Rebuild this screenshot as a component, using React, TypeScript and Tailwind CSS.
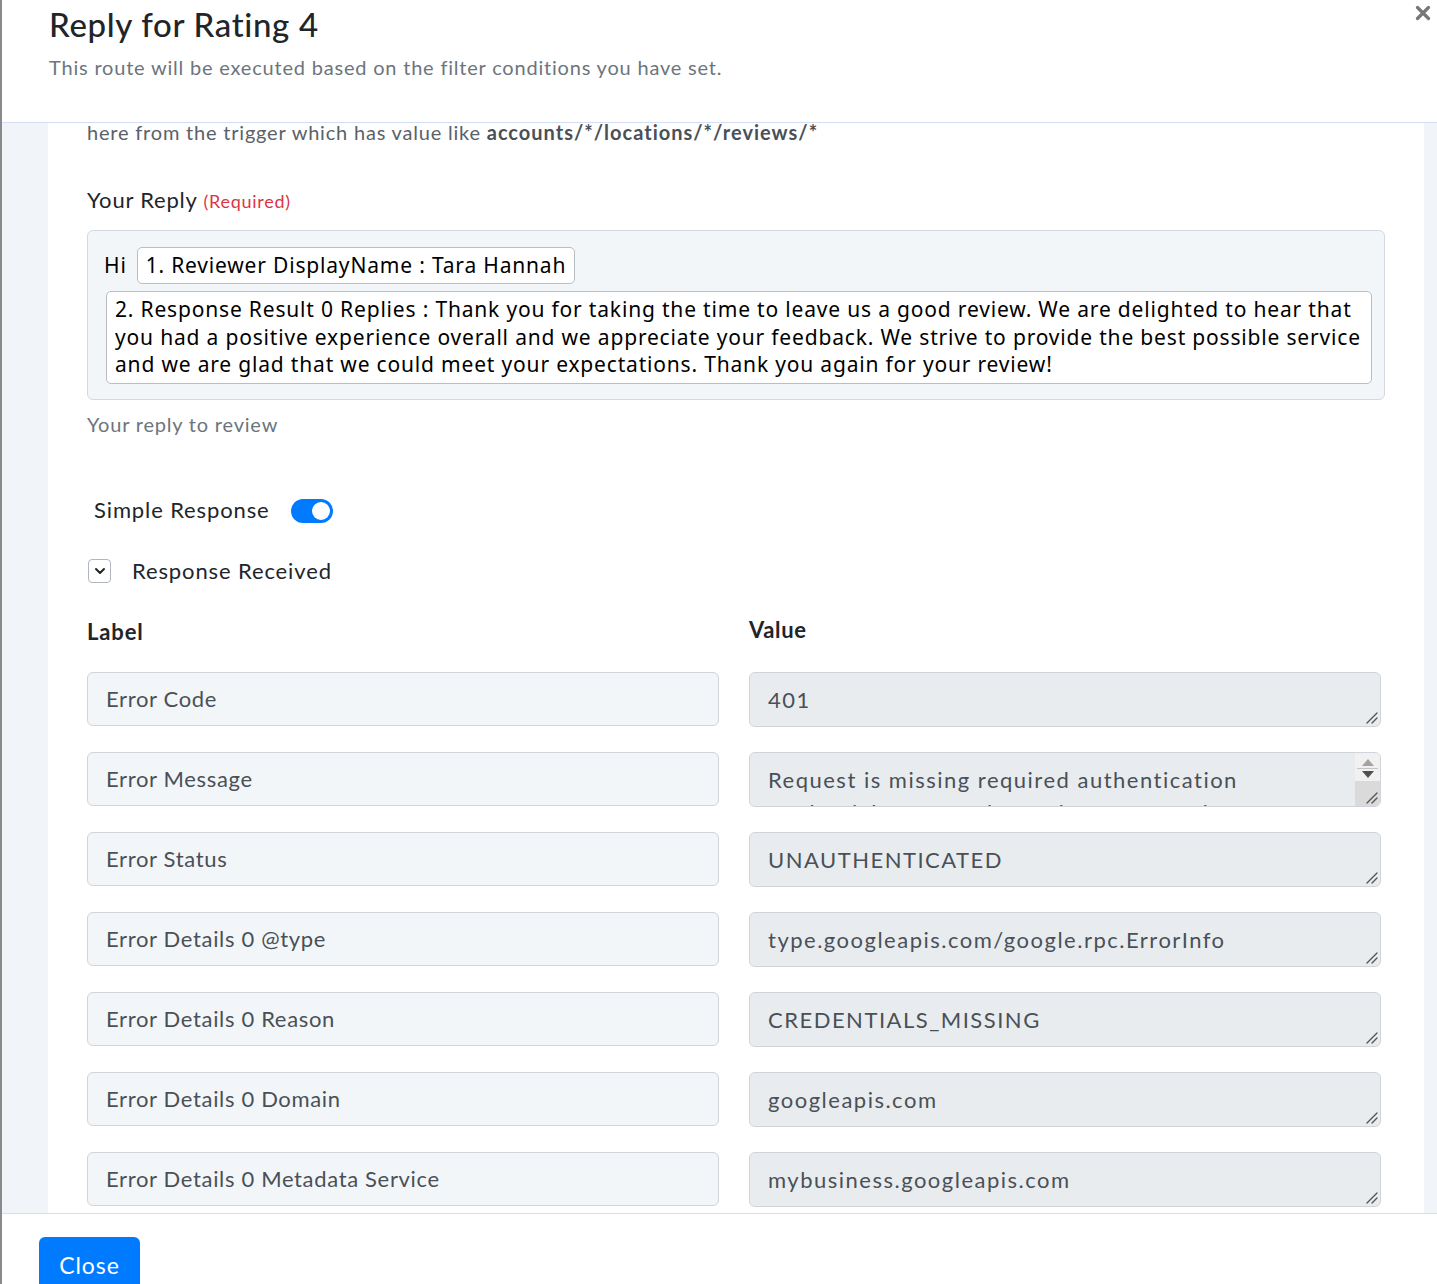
import { X, ChevronDown } from "lucide-react"

const rows = [
  { label: "Error Code", value: "401" },
  {
    label: "Error Message",
    value: "Request is missing required authentication credential. Expected OAuth 2 access token,",
    scroll: true,
  },
  { label: "Error Status", value: "UNAUTHENTICATED" },
  { label: "Error Details 0 @type", value: "type.googleapis.com/google.rpc.ErrorInfo" },
  { label: "Error Details 0 Reason", value: "CREDENTIALS_MISSING" },
  { label: "Error Details 0 Domain", value: "googleapis.com" },
  { label: "Error Details 0 Metadata Service", value: "mybusiness.googleapis.com" },
]

export default function App() {
  return (
    <div className="flex h-[1284px] w-full flex-col overflow-hidden border-l-2 border-[#8a8a8a] bg-white font-['Lato',sans-serif]">
      {/* header */}
      <div className="relative h-[123px] shrink-0 border-b border-[#d3def5] bg-white pl-[47px]">
        <h1 className="pt-[2px] text-[33px] leading-[44px] font-medium tracking-[0.02em] text-[#212529]">Reply for Rating 4</h1>
        <p className="mt-[7px] text-[20px] leading-[28px] tracking-[0.04em] text-[#6c757d]">
          This route will be executed based on the filter conditions you have set.
        </p>
        <button className="absolute top-[2px] right-[3px] text-[#777]">
          <X size={22} strokeWidth={3.5} />
        </button>
      </div>

      {/* body */}
      <div className="flex min-h-0 flex-1 overflow-hidden bg-[#f1f4f8] pl-[46px] pr-[13px]">
        <div className="min-w-0 flex-1 bg-white px-[39px]">
          <p className="text-[20px] leading-[18px] tracking-[0.04em] text-[#5a6169]">
            here from the trigger which has value like{" "}
            <span className="font-bold tracking-[0.05em] text-[#495057]">accounts/*/locations/*/reviews/*</span>
          </p>

          <div className="mt-[44px] text-[22px] leading-[30px] tracking-[0.036em] text-[#212529]">
            Your Reply <span className="text-[18px] tracking-[0.04em] text-[#dc3545]">(Required)</span>
          </div>

          <div className="mt-[14px] rounded-[6px] border border-[#d4d9df] bg-[#f3f6f9] pt-[16px] pr-[12px] pb-[15px] pl-[15px] font-['Noto_Sans',sans-serif] text-[21px] tracking-[0.039em] text-black">
            <div className="flex items-center gap-[10px]">
              <span className="ml-[1px]">Hi</span>
              <span className="rounded-[5px] border border-[#b9bec4] bg-white px-[8px] leading-[35px] whitespace-nowrap">
                1. Reviewer DisplayName : Tara Hannah
              </span>
            </div>
            <div className="mt-[7px] ml-[3px] overflow-hidden rounded-[5px] border border-[#b9bec4] bg-white px-[8px] py-[4px] leading-[27.5px] whitespace-nowrap">
              2. Response Result 0 Replies : Thank you for taking the time to leave us a good review. We are delighted to hear that
              <br />
              you had a positive experience overall and we appreciate your feedback. We strive to provide the best possible service
              <br />
              and we are glad that we could meet your expectations. Thank you again for your review!
            </div>
          </div>

          <div className="mt-[9px] text-[20px] leading-[30px] tracking-[0.04em] text-[#6c757d]">Your reply to review</div>

          <div className="mt-[56px] flex items-center pl-[7px]">
            <span className="text-[22px] leading-[30px] tracking-[0.04em] text-[#212529]">Simple Response</span>
            <span className="ml-[21px] mt-[2px] flex h-[24px] w-[42px] items-center justify-end rounded-full bg-[#007bff] pr-[3px]">
              <span className="h-[18px] w-[18px] rounded-full bg-white" />
            </span>
          </div>

          <div className="mt-[31px] flex items-center pl-[1px]">
            <span className="flex h-[24px] w-[23px] items-center justify-center rounded-[4px] border border-[#b0b6bd] text-[#212529]">
              <ChevronDown size={16} strokeWidth={3} />
            </span>
            <span className="ml-[21px] text-[22px] leading-[30px] tracking-[0.04em] text-[#212529]">Response Received</span>
          </div>

          <div className="mt-[31px] grid grid-cols-2 gap-x-[30px] pr-[4px]">
            <div className="text-[22px] leading-[30px] font-bold tracking-[0.04em] text-[#212529]">Label</div>
            <div className="-mt-[2px] text-[22px] leading-[30px] font-bold tracking-[0.03em] text-[#212529]">Value</div>
          </div>

          <div className="mt-[25px] grid grid-cols-2 gap-x-[30px] gap-y-[25px] pr-[4px]">
            {rows.map((r) => (
              <Row key={r.label} label={r.label} value={r.value} scroll={!!r.scroll} />
            ))}
          </div>
        </div>
      </div>

      {/* footer */}
      <div className="h-[71px] shrink-0 border-t border-[#d3def5] bg-white pt-[23px] pl-[37px]">
        <button className="h-[60px] w-[101px] rounded-t-[6px] bg-[#007bff] pb-[4px] text-[23px] tracking-[0.04em] text-white">Close</button>
      </div>
    </div>
  )
}

function ResizeGrip() {
  return (
    <svg className="absolute right-[2px] bottom-[2px]" width="12" height="12" viewBox="0 0 12 12">
      <path d="M1 11 L11 1 M6 11 L11 6" stroke="#555" strokeWidth="1.4" strokeLinecap="round" />
    </svg>
  )
}

function Row({ label, value, scroll }: { label: string; value: string; scroll: boolean }) {
  return (
    <>
      <div className="flex h-[54px] items-center rounded-[6px] border border-[#ced4da] bg-[#f3f6f9] px-[18px] text-[22px] tracking-[0.03em] text-[#495057]">
        {label}
      </div>
      <div className="relative h-[55px] overflow-hidden rounded-[6px] border border-[#ced4da] bg-[#e9ecef] text-[22px] leading-[33px] tracking-[0.068em] text-[#495057]">
        <div className={scroll ? "pt-[10px] pr-[30px] pl-[18px]" : "pt-[10px] pr-[18px] pl-[18px]"}>{value}</div>
        {scroll && (
          <div className="absolute top-0 right-0 bottom-0 flex w-[25px] flex-col bg-[#f1f1f1]">
            <div className="flex h-[15px] items-end justify-center pb-[2px]">
              <svg width="12" height="7" viewBox="0 0 12 7">
                <path d="M0 7 L6 0 L12 7 Z" fill="#a3a3a3" />
              </svg>
            </div>
            <div className="mx-[2px] h-px bg-[#c4c4c4]" />
            <div className="flex h-[12px] items-start justify-center pt-[2px]">
              <svg width="12" height="7" viewBox="0 0 12 7">
                <path d="M0 0 L12 0 L6 7 Z" fill="#505050" />
              </svg>
            </div>
            <div className="flex-1 bg-[#dadada]" />
          </div>
        )}
        <ResizeGrip />
      </div>
    </>
  )
}
